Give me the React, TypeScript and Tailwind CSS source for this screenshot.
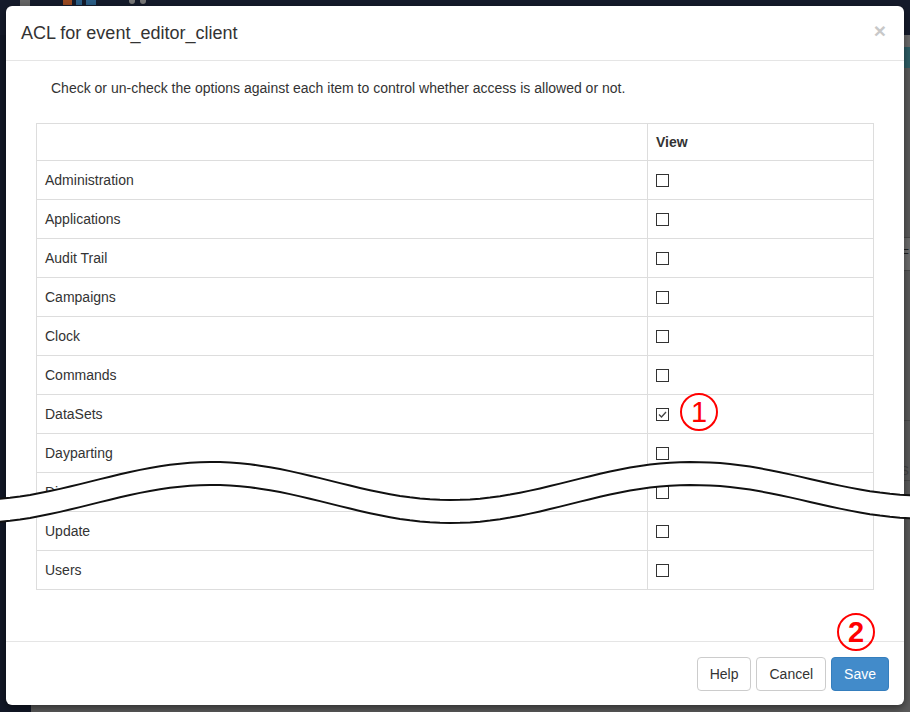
import React from 'react';

const items = [
  'Administration',
  'Applications',
  'Audit Trail',
  'Campaigns',
  'Clock',
  'Commands',
  'DataSets',
  'Dayparting',
  'Displays',
  'Update',
  'Users',
];

const checked = ['DataSets'];

// points of one wavy line of the "break" mark drawn over the table
const wave = (offset: number) =>
  Array.from({ length: 95 }, (_, i) => {
    const x = i * 10 - 10;
    const y = 481 + offset - 19 * Math.cos((2 * Math.PI * (x - 212)) / 478) - (x > 700 ? (x - 700) * 0.02 : 0);
    return [x, y] as [number, number];
  });

const Checkbox: React.FC<{ on?: boolean }> = ({ on }) => (
  <span className="w-[13px] h-[13px] border border-[#333] bg-white flex items-center justify-center">
    {on && (
      <svg width="11" height="11" viewBox="0 0 11 11">
        <path d="M2 5.5 L4.5 8 L9 3" fill="none" stroke="#444" strokeWidth="1.3" />
      </svg>
    )}
  </span>
);

const Marker: React.FC<{ n: string; bold?: boolean; className: string }> = ({ n, bold, className }) => (
  <div
    className={`absolute w-[38px] h-[38px] rounded-full border-2 border-[#f00] flex items-center justify-center text-[#f00] text-[29px] leading-none ${bold ? 'font-bold' : 'font-normal'} ${className}`}
  >
    {n}
  </div>
);

export default function App() {
  const upper = wave(0);
  const lower = wave(23);
  const fillPts = [...upper, ...[...lower].reverse()].map(p => p.join(',')).join(' ');

  return (
    <div className="relative w-[910px] h-[712px] overflow-hidden bg-[#5a5a5a] font-['Liberation_Sans',Arial,sans-serif] text-[#333]">
      {/* Dimmed app behind the dialog */}
      <div className="flex flex-col h-full">
        <div className="h-[35px] bg-[#151b2b] flex items-start gap-[33px] pl-[20px] shrink-0">
          <span className="w-[10px] h-[6px] bg-[#666]" />
          <span className="flex gap-[4px] mt-0">
            <span className="w-[9px] h-[5px] bg-[#9a4a22]" />
            <span className="w-[6px] h-[5px] bg-[#2b5d86]" />
            <span className="w-[10px] h-[5px] bg-[#2b5d86]" />
          </span>
          <span className="flex gap-[5px]">
            <span className="w-[6px] h-[4px] rounded-b-full bg-[#777]" />
            <span className="w-[6px] h-[4px] rounded-b-full bg-[#777]" />
          </span>
        </div>
        <div className="flex flex-1">
          <div className="w-[31px] bg-[#121827] shrink-0" />
          <div className="flex-1 flex flex-col bg-[#5b5b5b]">
            <div className="h-[12px] bg-[#6b6b6b]" />
            <div className="h-[21px] bg-[#2e5e66]" />
            <div className="h-[170px] border-b border-[#4a4a4a]" />
            <div className="h-[33px] border-b border-[#4a4a4a] bg-[#6e6e6e] flex justify-end items-center text-[13px] text-[#222] pr-[1px]">F</div>
            <div className="h-[150px] border-b border-[#4a4a4a]" />
            <div className="h-[60px] border-b border-[#4a4a4a] flex justify-end items-end text-[13px] text-[#444] pr-[1px]">S</div>
          </div>
        </div>
      </div>

      {/* Modal */}
      <div className="absolute left-[6px] top-[6px] w-[898px] h-[699px] bg-white rounded-[6px] shadow-[0_3px_9px_rgba(0,0,0,0.5)] flex flex-col">
        <div className="h-[55px] border-b border-[#e5e5e5] flex items-center pl-[15px] pr-[18px] shrink-0">
          <h4 className="text-[18px] text-[#333] leading-none">ACL for event_editor_client</h4>
          <span className="ml-auto text-[21px] font-bold text-[#c8c8c8] leading-none -mt-[6px]">×</span>
        </div>

        <div className="h-[580px] px-[30px] pt-[17px] shrink-0">
          <p className="pl-[15px] text-[14px] leading-[20px]">
            Check or un-check the options against each item to control whether access is allowed or not.
          </p>
          <div className="mt-[25px] w-[838px] border-l border-r border-t border-[#ddd] text-[14px]">
            <div className="flex h-[37px] border-b border-[#ddd]">
              <div className="w-[611px] border-r border-[#ddd]" />
              <div className="flex-1 pl-[8px] flex items-center font-bold">View</div>
            </div>
            {items.map(name => (
              <div key={name} className="flex h-[39px] border-b border-[#ddd]">
                <div className="w-[611px] border-r border-[#ddd] pl-[8px] flex items-center">{name}</div>
                <div className="flex-1 pl-[8px] flex items-center">
                  <Checkbox on={checked.includes(name)} />
                </div>
              </div>
            ))}
          </div>
        </div>

        <div className="flex-1 border-t border-[#e5e5e5] flex justify-end items-start gap-[5px] pt-[15px] pr-[15px]">
          <button className="h-[34px] px-[12px] border border-[#ccc] rounded-[4px] bg-white text-[14px] text-[#333]">Help</button>
          <button className="h-[34px] px-[12px] border border-[#ccc] rounded-[4px] bg-white text-[14px] text-[#333]">Cancel</button>
          <button className="h-[34px] px-[12px] border border-[#357ebd] rounded-[4px] bg-[#428bca] text-[14px] text-white">Save</button>
        </div>
      </div>

      {/* Break mark over the list */}
      <svg className="absolute left-0 top-0 pointer-events-none" width="910" height="712">
        <polygon points={fillPts} fill="#fff" />
        <polyline points={upper.map(p => p.join(',')).join(' ')} fill="none" stroke="#111" strokeWidth="2" />
        <polyline points={lower.map(p => p.join(',')).join(' ')} fill="none" stroke="#111" strokeWidth="2" />
      </svg>

      <Marker n="1" className="left-[680px] top-[393px]" />
      <Marker n="2" bold className="left-[837px] top-[613px]" />
    </div>
  );
}
